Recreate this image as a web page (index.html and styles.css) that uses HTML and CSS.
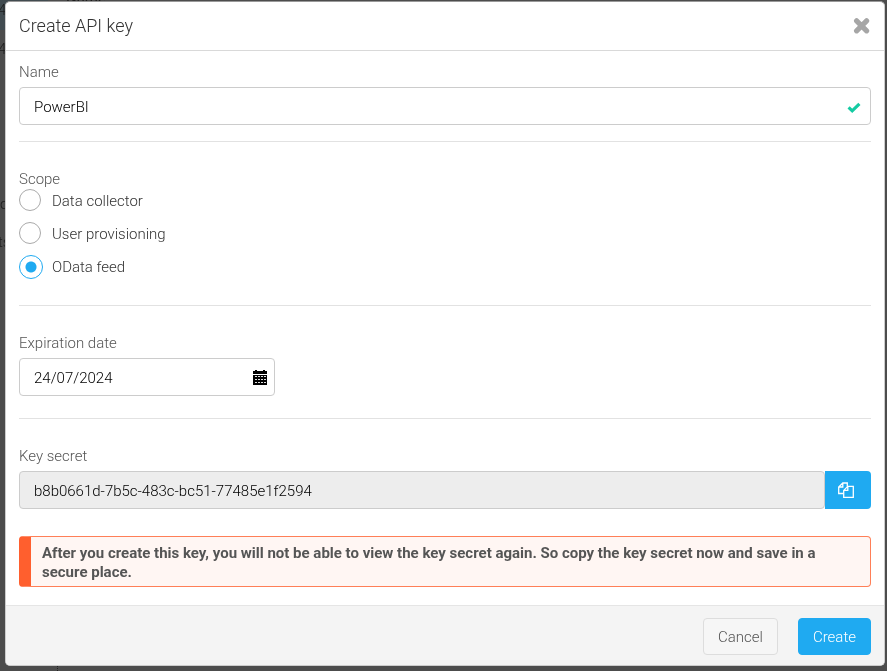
FILE: index.html
```html
<!DOCTYPE html>
<html lang="en">
<head>
    <meta charset="UTF-8">
    <meta name="viewport" content="width=device-width, initial-scale=1.0">
    <title>Create API key</title>
    <link rel="stylesheet" href="styles.css">
</head>
<body>
    <!-- page behind the dialog -->
    <div class="page" aria-hidden="true">
        <div class="page-tab"></div>
        <span class="page-text page-heading">Name</span>
        <span class="page-text page-row-1">4</span>
        <span class="page-text page-row-2">4</span>
        <span class="page-text page-row-3">o</span>
        <span class="page-text page-row-4">ts</span>
        <div class="page-divider"></div>
    </div>

    <form class="modal" role="dialog" aria-labelledby="modal-title">
        <header class="modal-header">
            <h1 class="modal-title" id="modal-title">Create API key</h1>
            <button type="button" class="close" aria-label="Close">
                <svg width="18" height="18" viewBox="0 0 18 18">
                    <path d="M3.6 3.8L13.6 13.8M13.6 3.8L3.6 13.8" fill="none" stroke="currentColor" stroke-width="5.2" stroke-linecap="round"/>
                </svg>
            </button>
        </header>

        <div class="modal-body">
            <div class="field">
                <label class="label" for="name">Name</label>
                <div class="input-wrap">
                    <input class="input" type="text" id="name" value="PowerBI">
                    <svg class="input-icon valid" width="14" height="12" viewBox="0 0 14 12">
                        <path d="M1.6 5.4L5.2 8.8L12.4 1.9" fill="none" stroke="currentColor" stroke-width="3.2"/>
                    </svg>
                </div>
            </div>

            <hr>

            <fieldset class="field">
                <legend class="label">Scope</legend>
                <div class="radios">
                    <label class="radio"><input type="radio" name="scope" value="collector">Data collector</label>
                    <label class="radio"><input type="radio" name="scope" value="provisioning">User provisioning</label>
                    <label class="radio"><input type="radio" name="scope" value="odata" checked>OData feed</label>
                </div>
            </fieldset>

            <hr class="hr-wide">

            <div class="field">
                <label class="label" for="expiration">Expiration date</label>
                <div class="input-wrap date">
                    <input class="input" type="text" id="expiration" value="24/07/2024">
                    <svg class="input-icon" width="14" height="15" viewBox="0 0 14 15" shape-rendering="crispEdges">
                        <path d="M0 1H2V0H4V1H10V0H12V1H14V4H0Z" fill="#000"/>
                        <path d="M0 5H14V15H0Z" fill="#000"/>
                        <path d="M2 7H4M5 7H7M8 7H10M11 7H13M2 10H4M5 10H7M8 10H10M11 10H13M2 13H4M5 13H7M8 13H10M11 13H13" transform="translate(0 -.5)" stroke="#ddd" stroke-width="1"/>
                    </svg>
                </div>
            </div>

            <hr class="hr-wide">

            <div class="field">
                <label class="label" for="secret">Key secret</label>
                <div class="input-group">
                    <input class="input" type="text" id="secret" value="b8b0661d-7b5c-483c-bc51-77485e1f2594" readonly>
                    <button type="button" class="copy" aria-label="Copy key secret">
                        <svg width="16" height="16" viewBox="0 0 16 16" fill="none" stroke="currentColor" stroke-width="1.3">
                            <path d="M5.5 11.5H.7V5L4.8 1H9.3V4.5M4.8 1V5H.7"/>
                            <path d="M9.8 4.3H15.3V15.3H5.7V8.4ZM9.8 4.3V8.4H5.7"/>
                        </svg>
                    </button>
                </div>
            </div>

            <div class="alert">After you create this key, you will not be able to view the key secret again. So copy the key secret now and save in a secure place.</div>
        </div>

        <footer class="modal-footer">
            <button type="button" class="btn">Cancel</button>
            <button type="submit" class="btn btn-primary">Create</button>
        </footer>
    </form>
</body>
</html>
```

FILE: styles.css
```css
* {
    box-sizing: border-box;
}
body {
    margin: 0;
    padding: 1px 2px 5px 5px;
    font-family: Roboto, "Liberation Sans", sans-serif;
    font-size: 15px;
    font-weight: 300;
    line-height: 20px;
    color: #333;
    background-color: #4c4c4c;
}
input, button {
    font: inherit;
}

/* dimmed page */
.page {
    position: fixed;
    inset: 0;
    overflow: hidden;
    color: #1c1c1c;
}
.page-tab {
    width: 48px;
    height: 30px;
    background-color: #414b50;
}
.page-text {
    position: absolute;
    left: 0;
}
.page-heading {
    left: 66px;
    top: -12px;
    font-weight: 400;
}
.page-row-1 {
    top: 0;
    left: -2px;
}
.page-row-2 {
    top: 39px;
    left: -2px;
}
.page-row-3 {
    top: 194px;
}
.page-row-4 {
    top: 232px;
    left: -2px;
}
.page-divider {
    position: absolute;
    left: 57px;
    bottom: 0;
    height: 30px;
    border-left: 1px dotted #222;
}

/* dialog */
.modal {
    position: relative;
    overflow: hidden;
    border: 1px solid #ccc;
    border-top-color: #999;
    border-radius: 5px;
    background-color: #fff;
}
.modal-header {
    display: flex;
    align-items: center;
    justify-content: space-between;
    height: 49px;
    padding: 0 13px;
    border-bottom: 1px solid #d9d9d9;
}
.modal-title {
    margin: 0;
    font-size: 18px;
    font-weight: 300;
}
.close {
    display: flex;
    padding: 0;
    border: none;
    color: #a6a6a6;
    background: none;
    cursor: pointer;
}
.modal-body {
    padding: 11px 13px 18px;
}
.field {
    margin: 0;
    padding: 0;
    border: none;
}
.label {
    display: block;
    padding: 0;
    color: #555;
}
hr {
    height: 1px;
    margin: 16px 0 27px;
    border: none;
    background-color: #e2e2e2;
}
.hr-wide {
    margin-top: 22px;
}
.input-wrap {
    position: relative;
    margin-top: 5px;
}
.date {
    max-width: 256px;
}
.input {
    display: block;
    width: 100%;
    height: 38px;
    padding: 2px 14px 0;
    border: 1px solid #ccc;
    border-radius: 4px;
    color: #000;
    background-color: #fff;
}
.input[readonly] {
    background-color: #ededed;
}
.input-icon {
    position: absolute;
    right: 8px;
    top: 12px;
}
.valid {
    top: 15px;
    right: 10px;
    color: #14cba3;
}
.radios {
    display: grid;
    gap: 9px;
    padding-bottom: 4px;
}
.radio {
    display: flex;
    align-items: flex-start;
    line-height: 24px;
    cursor: pointer;
}
.radio input {
    appearance: none;
    flex: none;
    width: 22px;
    height: 22px;
    margin: 0 11px 0 0;
    border: 1px solid #aaa;
    border-radius: 50%;
}
.radio input:checked {
    width: 24px;
    height: 24px;
    margin-right: 9px;
    border-color: #1faaf1;
    background: radial-gradient(circle, #1faaf1 5px, transparent 6px);
}
.input-group {
    display: flex;
    margin-top: 5px;
}
.input-group .input {
    flex: 1;
}
.copy {
    display: flex;
    align-items: center;
    justify-content: center;
    width: 46px;
    padding: 0 4px 0 0;
    border: none;
    border-radius: 0 4px 4px 0;
    color: #fff;
    background-color: #1faaf1;
    cursor: pointer;
}
.alert {
    margin-top: 27px;
    padding: 7px 11px 4px;
    border: 1px solid #ff7f57;
    border-left: 12px solid #ff5f2e;
    border-radius: 4px;
    font-weight: 700;
    line-height: 19px;
    color: #555;
    background-color: #fff6f3;
}
.modal-footer {
    display: flex;
    justify-content: flex-end;
    gap: 20px;
    padding: 12px 13px 10px;
    border-top: 1px solid #e5e5e5;
    background-color: #f4f4f4;
}
.btn {
    height: 37px;
    padding: 0 14px;
    border: 1px solid #ddd;
    border-radius: 4px;
    color: #555;
    background-color: #f6f6f6;
    cursor: pointer;
}
.btn-primary {
    border-color: #1faaf1;
    color: #fff;
    background-color: #1faaf1;
}
```
